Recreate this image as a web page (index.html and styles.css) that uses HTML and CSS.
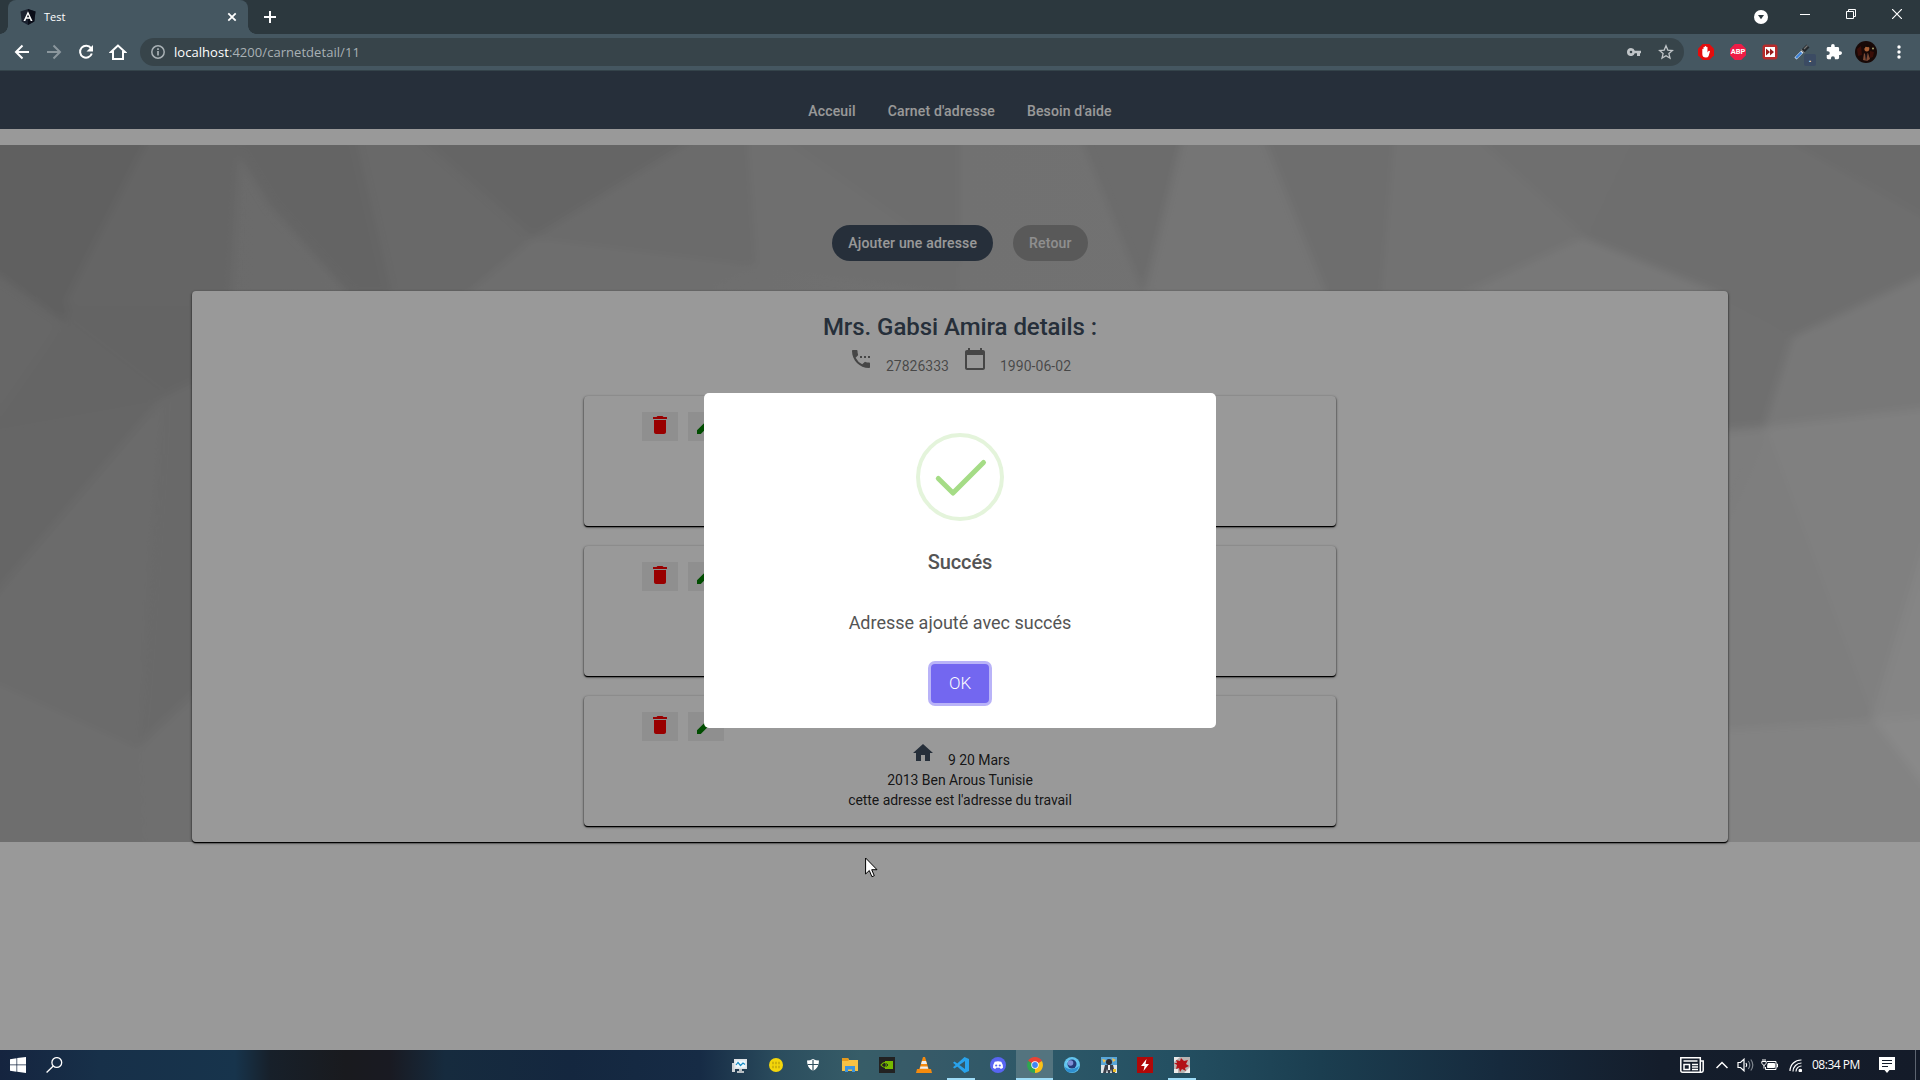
FILE: index.html
```html
<!DOCTYPE html>
<html lang="fr">
<head>
<meta charset="utf-8">
<title>Test</title>
<link rel="stylesheet" href="styles.css">
</head>
<body>
<svg class="defs" width="0" height="0">
  <symbol id="trash" viewBox="0 0 24 24"><path d="M6 19c0 1.100.9 2 2 2h8c1.100 0 2-.9 2-2V7H6v12zM19 4h-3.500l-1-1h-5l-1 1H5v2h14V4z"/></symbol>
  <symbol id="pencil" viewBox="0 0 24 24"><path d="M3 17.250V21h3.750L17.810 9.940l-3.750-3.750L3 17.250zM20.710 7.040a1 1 0 0 0 0-1.410l-2.340-2.340a1 1 0 0 0-1.410 0l-1.830 1.830 3.750 3.750 1.830-1.830z"/></symbol>
</svg>

<div class="screen">
  <header class="tabstrip">
    <div class="tab">
      <svg class="favicon" viewBox="0 0 16 16" width="16" height="16"><path d="M8 0l7.500 2.500-1.200 10L8 16l-6.300-3.500L.5 2.500z" fill="#1b2230"/><path d="M8 0l7.500 2.500-1.200 10L8 16z" fill="#0a0d18"/><path d="M8 2.200L3.500 12h1.800l.9-2.300h3.600l.9 2.300h1.800zM8 5.500l1.200 2.800H6.800z" fill="#fff"/></svg>
      <span class="tab-title">Test</span>
      <svg class="tab-close" viewBox="0 0 10 10" width="10" height="10"><path d="M1.300 1.300l7.400 7.400M8.700 1.300L1.300 8.700" stroke="#fff" stroke-width="1.800"/></svg>
    </div>
    <svg class="newtab" viewBox="0 0 12 12" width="12" height="12"><path d="M6 0v12M0 6h12" stroke="#fff" stroke-width="2"/></svg>
    <div class="window-controls">
      <span class="tabsearch"><svg viewBox="0 0 14 14" width="14" height="14"><circle cx="7" cy="7" r="7" fill="#fff"/><path d="M4 5h6L7 9.300z" fill="#2c383e"/></svg></span>
      <span class="winbtn"><svg width="10" height="10"><path d="M0 5.500h10" stroke="#fff"/></svg></span>
      <span class="winbtn"><svg width="10" height="10" fill="none" stroke="#fff"><path d="M.5 2.500h7v7h-7zM2.500 2.500v-2h7v7h-2"/></svg></span>
      <span class="winbtn"><svg width="10" height="10"><path d="M0 0l10 10M10 0L0 10" stroke="#fff" stroke-width="1.200"/></svg></span>
    </div>
  </header>

  <div class="toolbar">
    <span class="tool"><svg width="16" height="16" viewBox="0 0 16 16" fill="none" stroke="#fff" stroke-width="2"><path d="M15 8H2.500M8.500 1.500L2 8l6.500 6.500"/></svg></span>
    <span class="tool"><svg width="16" height="16" viewBox="0 0 16 16" fill="none" stroke="#8b979d" stroke-width="2"><path d="M1 8h12.500M7.500 1.500L14 8l-6.500 6.500"/></svg></span>
    <span class="tool"><svg width="16" height="16" viewBox="0 0 16 16"><path d="M13 4.200A6 6 0 1 0 13.800 9.500" fill="none" stroke="#fff" stroke-width="2"/><path d="M15 1v6.500H8.500z" fill="#fff"/></svg></span>
    <span class="tool"><svg width="18" height="18" viewBox="0 0 18 18"><path d="M9 2.500L2 9h2v7h10V9h2z" fill="none" stroke="#fff" stroke-width="2"/></svg></span>
    <div class="omnibox">
      <svg width="14" height="14" viewBox="0 0 14 14"><circle cx="7" cy="7" r="6.200" fill="none" stroke="#a9b1b5" stroke-width="1.500"/><path d="M7 6v4.500M7 3.200v1.700" stroke="#a9b1b5" stroke-width="1.700"/></svg>
      <span class="url"><b class="host">localhost</b>:4200/carnetdetail/11</span>
      <svg class="key" width="14" height="8" viewBox="0 0 14 8"><path d="M4 0a4 4 0 1 0 3.800 5.300H10V8h3V5.300h1V2.700H7.800A4 4 0 0 0 4 0zm0 5.300a1.300 1.300 0 1 1 0-2.600 1.300 1.300 0 0 1 0 2.600z" fill="#c0c5c8"/></svg>
      <svg class="star" width="16" height="16" viewBox="0 0 16 16"><path d="M8 1.800l1.800 4.300 4.600.4-3.500 3.100 1.100 4.500L8 11.700l-4 2.400 1.100-4.500-3.500-3.100 4.600-.4z" fill="none" stroke="#c0c5c8" stroke-width="1.300"/></svg>
    </div>
    <span class="tool ext"><svg width="16" height="16" viewBox="0 0 16 16"><path d="M4.700 0h6.600L16 4.700v6.600L11.300 16H4.700L0 11.300V4.700z" fill="#e40d0d"/><path d="M4.300 8V5.500q0-.8.6-.8t.6.800V3.500q0-.7.650-.7t.65.700V2.700q0-.7.700-.7t.7.700v.8q0-.7.650-.7t.65.700V8.500l1-1.500q1-.6 1.500.3L10.600 12q-.6 1.500-2.600 1.500-3.700 0-3.700-3.500z" fill="#fff"/></svg></span>
    <span class="tool ext"><span class="abp">ABP</span></span>
    <span class="tool ext"><svg width="16" height="16" viewBox="0 0 16 16"><rect x=".5" y=".5" width="15" height="15" rx="3" fill="#b92b2b"/><rect x="3" y="3" width="10" height="10" fill="#fff"/><path d="M4 4.500L8 8l-4 3.500zM8 4.500L12 8l-4 3.500z" fill="#9b1c1c"/></svg></span>
    <span class="tool ext dropper"><svg width="16" height="16" viewBox="0 0 16 16"><path d="M1.500 14.500L9 7" stroke="#dce8f4" stroke-width="3"/><path d="M2 14L7.500 8.500" stroke="#3b80d8" stroke-width="2.200"/><path d="M8.500 7.500L14 2" stroke="#23282c" stroke-width="4"/><path d="M7 5.500l3.500 3.500M10 5l3.500-3.500" stroke="#777" stroke-width="1.300"/></svg><i class="badge">.</i></span>
    <span class="tool ext"><svg width="16" height="16" viewBox="1 1 22 22"><path d="M20.500 11H19V7a2 2 0 0 0-2-2h-4V3.500a2.500 2.500 0 0 0-5 0V5H4a2 2 0 0 0-2 2v3.800h1.500a2.700 2.700 0 0 1 0 5.400H2V20a2 2 0 0 0 2 2h3.800v-1.500a2.700 2.700 0 0 1 5.400 0V22H17a2 2 0 0 0 2-2v-4h1.500a2.500 2.500 0 0 0 0-5z" fill="#fff"/></svg></span>
    <span class="tool ext"><svg width="22" height="22" viewBox="0 0 22 22"><circle cx="11" cy="11" r="11" fill="#180907"/><path d="M2 8l4-3 1 9-4 1zM15 10l4 1-1 5-3 1z" fill="#3a0e08"/><ellipse cx="11.800" cy="7.500" rx="2.500" ry="3" fill="#a86036"/><path d="M8.500 6q3-4 6-1l-1 1.200-3-.4-1 2z" fill="#120806"/><path d="M9 12l2 2 2-2 2 6-3 2-4-1z" fill="#7d4b35"/><path d="M10 13l1 8 1.500-8z" fill="#1a1218"/><circle cx="18" cy="7.500" r="1" fill="#a7a36b"/></svg></span>
    <span class="tool ext"><svg class="menu" width="4" height="14" fill="#fff"><circle cx="2" cy="2" r="1.700"/><circle cx="2" cy="7" r="1.700"/><circle cx="2" cy="12" r="1.700"/></svg></span>
  </div>

  <main class="page">
    <nav class="nav"><a>Acceuil</a><a>Carnet d'adresse</a><a>Besoin d'aide</a></nav>
    <section class="hero">
      <svg class="facets" viewBox="0 0 1920 697" preserveAspectRatio="none">
        <defs>
          <linearGradient id="base"><stop offset="0" stop-color="#a9a9a9"/><stop offset=".1" stop-color="#b1b1b1"/><stop offset=".5" stop-color="#bdbdbd"/><stop offset=".85" stop-color="#bfbfbf"/><stop offset="1" stop-color="#c6c6c6"/></linearGradient>
          <filter id="soft" x="-5%" y="-5%" width="110%" height="110%"><feGaussianBlur stdDeviation="4.500"/></filter>
        </defs>
        <rect width="1920" height="697" fill="url(#base)"/>
        <g filter="url(#soft)">
          <path d="M-10-10H150L64 178 0 131-10 125z" fill="#a0a0a0"/>
          <path d="M-10 125L64 178-10 290z" fill="#acacac"/>
          <path d="M150-10H240L230 160H64z" fill="#a9a9a9"/>
          <path d="M64 178L162 253-10 284z" fill="#a8a8a8"/>
          <path d="M64 178L72 158H230V240L162 253z" fill="#a7a7a7"/>
          <path d="M-10 284L162 253-10 455z" fill="#aaa"/>
          <path d="M162 253L-10 455V535L138 603 150 400z" fill="#b2b2b2"/>
          <path d="M162 253L200 235V551L138 603z" fill="#b0b0b0"/>
          <path d="M-10 535L138 603 143 707H-10z" fill="#b8b8b8"/>
          <path d="M138 603L200 545V707H143z" fill="#b9b9b9"/>
          <path d="M227-10H355L392 150H350L270 60z" fill="#a7a7a7"/>
          <path d="M355-10H416L533 93 465 150H392z" fill="#afafaf"/>
          <path d="M416-10H700L533 93z" fill="#a9a9a9"/>
          <path d="M700-10H747L757 121 533 93z" fill="#b2b2b2"/>
          <path d="M533 93L757 121 700 150H465z" fill="#b8b8b8"/>
          <path d="M747-10H960V150L757 121z" fill="#bababa"/>
          <path d="M775-10H960V120z" fill="#b6b6b6"/>
          <path d="M1079-10H1183L1144 150z" fill="#b4b4b4"/>
          <path d="M1183-10H1263L1327 150H1144z" fill="#c3c3c3"/>
          <path d="M1263-10H1395L1382 150H1327z" fill="#b7b7b7"/>
          <path d="M1395-10H1471L1584 93 1462 150H1382z" fill="#bfbfbf"/>
          <path d="M1471-10H1633L1584 93z" fill="#bababa"/>
          <path d="M1633-10H1780L1930 75V130L1793 192 1584 93z" fill="#b7b7b7"/>
          <path d="M1780-10H1930V75z" fill="#b2b2b2"/>
          <path d="M1584 93L1462 150H1725z" fill="#c9c9c9"/>
          <path d="M1720 155L1793 192 1765 282 1720 286z" fill="#bababa"/>
          <path d="M1793 192L1930 127V263L1765 282z" fill="#c9c9c9"/>
          <path d="M1720 286L1765 282 1728 360 1720 380z" fill="#d0d0d0"/>
          <path d="M1765 282L1720 380V584L1872 574z" fill="#d2d2d2"/>
          <path d="M1765 282L1930 263V400L1872 574z" fill="#d6d6d6"/>
          <path d="M1872 574L1930 380V569z" fill="#dedede"/>
          <path d="M1720 584L1872 574 1930 569V707H1720z" fill="#dadada"/>
          <path d="M1872 574L1930 569V650z" fill="#e4e4e4"/>
        </g>
      </svg>
      <div class="actions"><button class="pill primary">Ajouter une adresse</button><button class="pill muted">Retour</button></div>
      <article class="panel">
        <h1 class="panel-title">Mrs. Gabsi Amira details :</h1>
        <div class="contact">
          <svg width="24" height="24" viewBox="0 0 24 24"><path d="M11 9h2v2h-2V9zm4 0h2v2h-2zm5 6.500c-1.250 0-2.450-.2-3.570-.57a1 1 0 0 0-1.020.24l-2.200 2.200a15.070 15.070 0 0 1-6.590-6.580l2.200-2.210a.96.96 0 0 0 .25-1A11.360 11.360 0 0 1 8.500 4c0-.55-.45-1-1-1H4c-.55 0-1 .45-1 1 0 9.390 7.610 17 17 17 .55 0 1-.45 1-1v-3.500c0-.55-.45-1-1-1zM19 9v2h2V9h-2z"/></svg>
          <span class="contact-text">27826333</span>
          <svg width="24" height="24" viewBox="0 0 24 24"><path d="M20 3h-1V1h-2v2H7V1H5v2H4c-1.100 0-2 .9-2 2v16c0 1.100.9 2 2 2h16c1.100 0 2-.9 2-2V5c0-1.100-.9-2-2-2zm0 18H4V8h16v13z"/></svg>
          <span class="contact-text date">1990-06-02</span>
        </div>
        <div class="address-list">
          <div class="address"><div class="tools"><span class="iconbtn del"><svg width="24" height="24"><use href="#trash"/></svg></span><span class="iconbtn edit"><svg width="24" height="24"><use href="#pencil"/></svg></span></div></div>
          <div class="address"><div class="tools"><span class="iconbtn del"><svg width="24" height="24"><use href="#trash"/></svg></span><span class="iconbtn edit"><svg width="24" height="24"><use href="#pencil"/></svg></span></div></div>
          <div class="address">
            <div class="tools"><span class="iconbtn del"><svg width="24" height="24"><use href="#trash"/></svg></span><span class="iconbtn edit"><svg width="24" height="24"><use href="#pencil"/></svg></span></div>
            <div class="street"><svg width="24" height="24" viewBox="0 0 24 24"><path d="M10 20v-6h4v6h5v-8h3L12 3 2 12h3v8z"/></svg><span class="contact-text">9 20 Mars</span></div>
            <div>2013 Ben Arous Tunisie</div>
            <div>cette adresse est l'adresse du travail</div>
          </div>
        </div>
      </article>
    </section>
    <div class="overlay">
      <div class="dialog">
        <svg width="88" height="88" viewBox="0 0 88 88" fill="none"><circle cx="44" cy="44" r="42" stroke="#e4f4db" stroke-width="4"/><path d="M22.300 45.500L37 60 67.500 29.500" stroke="#a5dc86" stroke-width="5" stroke-linecap="round" stroke-linejoin="round"/></svg>
        <h2 class="dialog-title">Succés</h2>
        <p class="dialog-text">Adresse ajouté avec succés</p>
        <button class="ok">OK</button>
      </div>
    </div>
  </main>

  <footer class="taskbar">
    <svg class="start" width="16" height="16" viewBox="0 0 16 16" fill="#fff"><path d="M0 2.200l6.500-1v6.300H0zM7.200 1.100L16 0v7.500H7.200zM0 8.300h6.500v6.400L0 13.800zM7.200 8.300H16V16l-8.800-1.200z"/></svg>
    <svg class="search" width="17" height="16" viewBox="0 0 17 16" fill="none" stroke="#fff" stroke-width="1.300"><circle cx="10.800" cy="5.500" r="4.900"/><path d="M7.300 9L.6 15.500"/></svg>
    <div class="apps">
      <span class="app"><svg width="16" height="16"><path d="M1 6h3v9H1z" fill="#cfd3d6"/><rect x="3" y="2" width="13" height="10" fill="#dfe3e6"/><rect x="4.500" y="3.500" width="10" height="7" fill="#eef8fc"/><path d="M5 8l2-2.500 2.500 3L12 6l2 1.500" fill="none" stroke="#168bc4" stroke-width="1.200"/><path d="M8 12h3v2h2v2H6v-2h2z" fill="#b8bfc4"/></svg></span>
      <span class="app"><svg width="16" height="16"><circle cx="8" cy="8" r="7" fill="#f3d60b"/><path d="M4 6h8M4 10h8" stroke="#d0b40a" stroke-width="2.500" stroke-dasharray="2 1"/></svg></span>
      <span class="app"><svg width="16" height="16"><path d="M8 2q3 1.500 6 1.500Q14 11 8 14 2 11 2 3.500 5 3.500 8 2z" fill="#fff"/><path d="M8 3v11M2.500 7.500h11" stroke="#33515f" stroke-width="1.200"/></svg></span>
      <span class="app"><svg width="16" height="16"><path d="M0 1h6l1 2h9v11H0z" fill="#f6c244"/><path d="M0 1h6l1 2-1 1H0z" fill="#e59a1c"/><path d="M3 9h10v6h-3v-2.500H6V15H3z" fill="#3b94dd"/></svg></span>
      <span class="app"><svg width="16" height="16"><path d="M0 0h16v16H0z" fill="#222"/><path d="M6 4h8v8H6z" fill="#76b900"/><path d="M2 8q4-5.500 9 0-5 5-9 0z" fill="none" stroke="#76b900" stroke-width="1.200"/><path d="M5 8q2.500-2.500 4 0-1.500 2.500-4 0z" fill="none" stroke="#222" stroke-width="1"/></svg></span>
      <span class="app"><svg width="16" height="16"><path d="M1 12h14l1 4H0z" fill="#f58a0e"/><path d="M7 0h2l4 13q-5 2-10 0z" fill="#f58a0e"/><path d="M6 4h4l1 3H5zM4.500 9.500h7l.7 2.200H3.800z" fill="#eee"/></svg></span>
      <span class="app running"><svg width="16" height="16"><path d="M11.500 0L16 2v12l-4.500 2L0 5.800 1.500 4.500 12 12V4L1.500 11.500 0 10.200z" fill="#29a3ec"/></svg></span>
      <span class="app"><svg width="16" height="16"><circle cx="8" cy="8" r="8" fill="#5865f2"/><path d="M4.700 4.800q3.300-1.300 6.600 0Q13 7.500 13 10.700 12 11.500 10.700 12l-.8-1.200H6.100L5.300 12Q4 11.500 3 10.700 3 7.500 4.700 4.800z" fill="#fff"/><circle cx="6.200" cy="8.500" r="1.100" fill="#5865f2"/><circle cx="9.800" cy="8.500" r="1.100" fill="#5865f2"/></svg></span>
      <span class="app active"><svg width="16" height="16" viewBox="-8 -8 16 16"><path d="M0 0L-6.900-4A8 8 0 0 1 6.900-4z" fill="#e94335"/><path d="M0 0L6.900-4A8 8 0 0 1 0 8z" fill="#fbc116"/><path d="M0 0V8A8 8 0 0 1-6.900-4z" fill="#30a652"/><circle r="3.700" fill="#fff"/><circle r="2.900" fill="#4286f4"/></svg></span>
      <span class="app"><svg width="16" height="16"><circle cx="8" cy="8" r="8" fill="#63c5ef"/><path d="M2 6a7 7 0 0 1 12 1q-2-4-5-4T2 6z" fill="#b8f0fa"/><circle cx="8" cy="7" r="4.500" fill="#253a78"/><circle cx="6.500" cy="6" r="2.800" fill="#7d8fd6"/><path d="M1 10q7 5 14-1-2 7-8 6.500T1 10z" fill="#2f8fd0"/></svg></span>
      <span class="app"><svg width="16" height="16"><path d="M0 0h16v16H0z" fill="#58a6d8"/><path d="M0 8h16v8H0z" fill="#dfe5e8"/><path d="M1 2l4 1-2 3zM11 1l4 2-3 2z" fill="#f3c14b"/><circle cx="8" cy="5" r="3" fill="#2b2d33"/><path d="M4 8h8l2 8h-3l-1-4-1 4H7l-1-4-1 4H2z" fill="#3a3f4a"/><path d="M7 8h2v5H7z" fill="#e9edf0"/><path d="M12 12h3v3h-3z" fill="#f0c22a"/></svg></span>
      <span class="app"><svg width="16" height="16"><path d="M0 0h16v16H0z" fill="#b00808"/><path d="M9.500 2L4 9h3.500L6.500 14 12 7H8.500z" fill="#fff"/></svg></span>
      <span class="app running"><svg width="16" height="16"><path d="M0 0h16v16H0z" fill="#b9b4b2"/><path d="M0 0h6L0 5zM10 16h6v-6zM0 12h4v4H0z" fill="#ecebea"/><path d="M2 3l4 1 1-3 3 3 4-1-2 4 3 2-4 2 1 3-4-2-2 3-1-4-3 1 1-4-3-2h3z" fill="#b31217"/></svg></span>
    </div>
    <div class="tray">
      <svg class="news" width="24" height="16" fill="none" stroke="#fff" stroke-width="1.500"><path d="M.8.800h19.500v14.400H2.500q-1.700 0-1.700-1.700zM20.500 4h2.700v9.500q0 1.700-1.700 1.700h-2M3.500 4h14M12 7.500h6M12 10h6M12 12.500h6M4 7.500h5.500v5H4z"/></svg>
      <svg class="chev" width="12" height="8" fill="none" stroke="#fff" stroke-width="1.500"><path d="M.5 7L6 1.500 11.500 7"/></svg>
      <svg class="sound" width="17" height="14" fill="none" stroke="#fff" stroke-width="1.200"><path d="M1 4.500h2.500L7 1.200v11.600L3.500 9.500H1z"/><path d="M9 5q1.500 2 0 4"/><path d="M11.300 3q3 4 0 8M13.800 1.500q4 5.500 0 11" stroke="#7f868e"/></svg>
      <svg class="battery" width="17" height="12" fill="none" stroke="#fff"><path d="M6 2.500h9v8H4.500V8M15.500 5h1v3h-1"/><path d="M7 4.500h6.500v4H6.500z" fill="#fff"/><path d="M.8 2.500h4.400v2L3 6.500.8 4.500zM2 0v2.500M4 0v2.500M3 6v3.500"/></svg>
      <svg class="wifi" width="13" height="13" fill="none" stroke="#fff" stroke-width="1.200"><path d="M1 12A11 11 0 0 1 12.500 1M4 12.500A8.500 8.500 0 0 1 12.500 4M7 12.500A5.500 5.500 0 0 1 12.500 7"/><circle cx="11.300" cy="11.500" r="1.200" fill="#fff"/></svg>
      <span class="clock">08:34 PM</span>
      <svg class="notif" width="16" height="16"><path d="M0 0h16v13h-5.500L8 16l-2.500-3H0z" fill="#fff"/><path d="M3 3.500h10M3 6.500h10M3 9.500h6" stroke="#141d2b"/></svg>
      <i class="peek"></i>
    </div>
  </footer>
  <svg class="cursor" width="13" height="21" viewBox="0 0 13 21"><path d="M.6 1v16l3.700-3.500 2.600 6.200 2.400-1-2.600-6H12z" fill="#fff" stroke="#000"/></svg>
</div>
</body>
</html>
```
FILE: styles.css
```css
* { box-sizing: border-box; }
body { margin: 0; overflow: hidden; background: #999; }
svg { display: block; flex: none; }
.defs { position: absolute; }
.screen { position: relative; width: 1920px; height: 1080px; display: flex; flex-direction: column; font-family: Roboto, sans-serif; }

.tabstrip { height: 34px; flex: none; background: #2c383e; display: flex; padding-left: 8px; font-family: "Open Sans", "Noto Sans", sans-serif; }
.tab { position: relative; width: 240px; height: 34px; padding: 0 11px 0 12px; background: #455761; border-radius: 8px 8px 0 0; display: flex; align-items: center; }
.tab::before, .tab::after { content: ""; position: absolute; bottom: 0; width: 8px; height: 8px; }
.tab::before { left: -8px; background: radial-gradient(circle at 0 0, #2c383e 7.500px, #455761 8px); }
.tab::after { right: -8px; background: radial-gradient(circle at 100% 0, #2c383e 7.500px, #455761 8px); }
.tab-title { margin-left: 8px; color: #fff; font-size: 11px; line-height: 16px; }
.tab-close { margin-left: auto; }
.newtab { margin: 11px 0 0 16px; }
.window-controls { margin-left: auto; display: flex; }
.tabsearch { width: 42px; height: 34px; display: flex; align-items: center; justify-content: center; }
.winbtn { width: 46px; height: 28px; display: flex; align-items: center; justify-content: center; }

.toolbar { height: 37px; flex: none; background: #455761; border-bottom: 1px solid #34434a; display: flex; align-items: center; padding: 0 6px; }
.tool { width: 32px; height: 32px; display: flex; align-items: center; justify-content: center; }
.omnibox { width: 1544px; height: 28px; margin: 0 6px; padding: 0 10px 0 11px; border-radius: 14px; background: #37444a; display: flex; align-items: center; font-family: "Open Sans", "Noto Sans", sans-serif; }
.url { margin-left: 9px; color: #a9b1b5; font-size: 13px; line-height: 18px; letter-spacing: 0.05px; }
.host { color: #fff; font-weight: 400; }
.key { margin-left: auto; }
.star { margin-left: 17px; }
.menu { margin-left: 1px; }
.abp { width: 16px; height: 16px; background: #ee1c46; clip-path: polygon(30% 0, 70% 0, 100% 30%, 100% 70%, 70% 100%, 30% 100%, 0 70%, 0 30%); color: #fff; font: 700 7.500px/16px Roboto, sans-serif; text-align: center; }
.dropper { position: relative; }
.badge { position: absolute; left: 18px; top: 18px; width: 12px; height: 12px; border-radius: 2px; background: #3b4b63; color: #fff; font: 700 9px/10px Roboto, sans-serif; text-align: center; }

.page { position: relative; height: 979px; flex: none; background: #fff; font-size: 14px; line-height: 20px; color: rgba(0, 0, 0, .87); }
.nav { height: 58px; padding-top: 30px; background: #404f62; display: flex; justify-content: center; gap: 32px; color: #fff; font-weight: 500; letter-spacing: 0.16px; }
.hero { position: relative; height: 697px; margin-top: 16px; padding-top: 80px; display: flex; flex-direction: column; align-items: center; overflow: visible; }
.facets { position: absolute; inset: 0; width: 100%; height: 100%; }
.actions { position: relative; display: flex; gap: 20px; }
.pill { height: 36px; padding: 0 16px; border: 0; border-radius: 18px; font: 500 14px/36px Roboto, sans-serif; letter-spacing: 0.18px; color: #fff; }
.primary { background: #404f62; }
.muted { background: #959595; color: #eee; }
.panel { position: relative; width: 1536px; height: 551px; margin-top: 30px; padding-top: 20px; border-radius: 4px; background: #fff; box-shadow: 0 2px 1px -1px #000, 0 1px 1px 0 #000, 0 1px 3px 0 rgba(0, 0, 0, .6); text-align: center; }
.panel-title { margin: 0; color: #404f62; font-size: 24px; font-weight: 500; line-height: 32px; letter-spacing: -0.05px; }
.contact { height: 30px; margin-top: 4px; display: flex; justify-content: center; color: rgba(0, 0, 0, .54); fill: #757575; }
.contact-text { margin: 9px 0 0 13px; }
.contact-text + svg { margin-left: 14px; }
.date { letter-spacing: 0.05px; }
.address-list { margin-top: 19px; display: flex; flex-direction: column; align-items: center; gap: 20px; }
.address { width: 752px; height: 130px; padding-top: 16px; border-radius: 4px; background: #fff; letter-spacing: -0.05px; box-shadow: 0 2px 1px -1px #000, 0 1px 1px 0 #000, 0 1px 3px 0 rgba(0, 0, 0, .6); }
.tools { padding-left: 58px; display: flex; gap: 10px; }
.iconbtn { width: 36px; height: 29px; padding: 1px 6px; background: #efefef; }
.del { fill: #f00; }
.edit { fill: #008000; }
.street { height: 29px; padding-left: 1px; display: flex; justify-content: center; fill: #404f62; }

.overlay { position: absolute; inset: 0; padding-top: 322px; background: rgba(0, 0, 0, .4); display: flex; justify-content: center; align-items: flex-start; }
.dialog { width: 512px; height: 335px; padding-top: 40px; border-radius: 5px; background: #fff; display: flex; flex-direction: column; align-items: center; color: #545454; }
.dialog-title { margin: 29px 0 0; font-size: 20px; font-weight: 500; line-height: 24px; letter-spacing: -0.1px; }
.dialog-text { margin: 36px 0 0; font-size: 18px; line-height: 26px; }
.ok { width: 58px; height: 39px; margin-top: 28px; padding: 0; border: 0; border-radius: 4px; background: #7367f0; box-shadow: 0 0 0 3px #b9b3f8; color: #fff; font: 300 17px/39px Roboto, sans-serif; }

.taskbar { height: 30px; flex: none; display: flex; align-items: center; background: linear-gradient(90deg, #15243f 0, #173049 100px, #17344c 235px, #17202a 270px, #191a1e 345px, #191a22 390px, #162b3e 445px, #14273f 570px, #162b45 700px, #2b4d5e 780px, #375d68 860px, #375a68 920px, #2d5868 1040px, #245062 1170px, #1b3e50 1320px, #162a3d 1500px, #141d2b 1660px, #141b29 1920px); }
.start { margin-left: 10px; }
.search { margin-left: 20px; }
.app { width: 36.920px; height: 30px; display: flex; align-items: center; justify-content: center; }
.apps { display: flex; margin-left: 658px; }
.active { background: #54747f; box-shadow: inset 0 -2px #9edcf7; }
.running { background: linear-gradient(#9edcf7, #9edcf7) center bottom / 28px 2px no-repeat; }
.tray { margin-left: auto; display: flex; align-items: center; height: 30px; color: #fff; }
.chev { margin-left: 12px; }
.sound { margin-left: 9px; }
.battery { margin-left: 7px; }
.wifi { margin-left: 11px; }
.clock { width: 49px; margin-left: 10px; font: 12px/16px "Open Sans", "Noto Sans", sans-serif; letter-spacing: -0.5px; white-space: nowrap; }
.notif { margin-left: 18px; }
.peek { width: 1px; height: 30px; margin: 0 4px 0 20px; background: #5d6470; }

.cursor { position: absolute; left: 865px; top: 857px; }
```
